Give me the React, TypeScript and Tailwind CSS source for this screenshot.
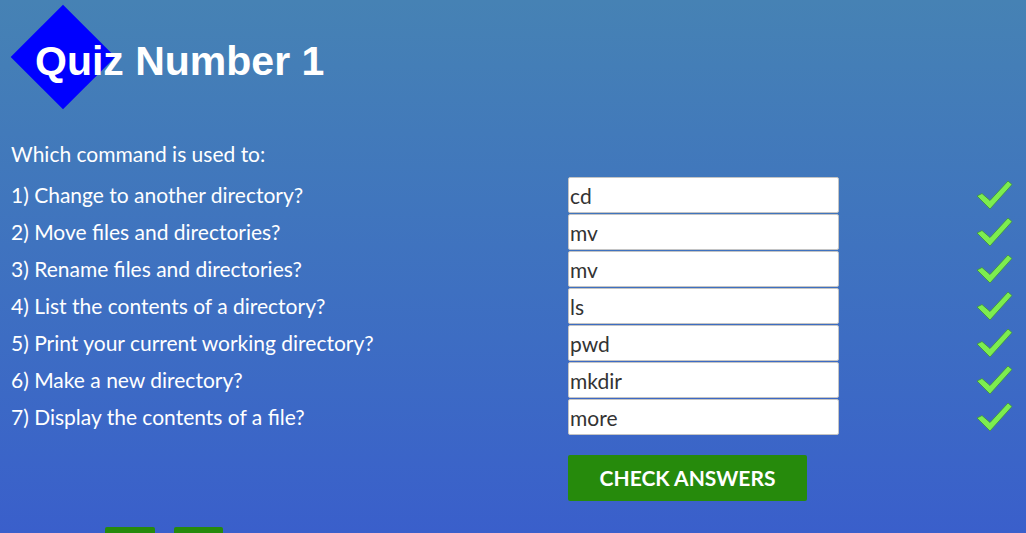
import React from "react";

const rows = [
  { q: "1) Change to another directory?", a: "cd" },
  { q: "2) Move files and directories?", a: "mv" },
  { q: "3) Rename files and directories?", a: "mv" },
  { q: "4) List the contents of a directory?", a: "ls" },
  { q: "5) Print your current working directory?", a: "pwd" },
  { q: "6) Make a new directory?", a: "mkdir" },
  { q: "7) Display the contents of a file?", a: "more" },
];

function Check() {
  return (
    <svg width="40" height="34" viewBox="0 0 40 34" className="block">
      <polygon
        points="3,18 8,15.5 16,22.5 34,3 38,6.5 16,31"
        fill="#7ded4f"
        stroke="#3c8f40"
        strokeWidth="0.8"
        strokeLinejoin="round"
      />
    </svg>
  );
}

export default function App() {
  return (
    <div
      className="h-screen overflow-hidden bg-gradient-to-b from-[#4682b4] to-[#3a5fcb] text-white"
      style={{ fontFamily: "Lato, 'Open Sans', sans-serif" }}
    >
      <div className="relative h-[120px]">
        <div className="absolute left-[26px] top-[20px] w-[74px] h-[74px] bg-[#0000ff] rotate-45" />
        <h1
          className="absolute left-[35px] top-[41px] text-[41px] leading-none font-bold"
          style={{ fontFamily: "'Liberation Sans', Arial, sans-serif" }}
        >
          Quiz Number 1
        </h1>
      </div>
      <div className="pl-[11px] pt-[20px] text-[21px] leading-[28px]">Which command is used to:</div>
      <div className="mt-[9px] flex flex-col gap-px">
        {rows.map((r, i) => (
          <div key={i} className="flex items-center h-[36px]">
            <div className="w-[568px] pl-[11px] text-[21px]">{r.q}</div>
            <input
              readOnly
              value={r.a}
              className="w-[271px] h-[36px] bg-white border border-[#c4c4c4] rounded-[2px] px-[1px] text-[21px] text-[#333]"
              style={{ fontFamily: "Lato, 'Open Sans', sans-serif" }}
            />
            <div className="ml-[135px]">
              <Check />
            </div>
          </div>
        ))}
      </div>
      <div className="pl-[568px] mt-[20px]">
        <button className="w-[239px] h-[46px] bg-[#268a0c] rounded-[2px] text-white font-bold text-[21px]">
          CHECK ANSWERS
        </button>
      </div>
      <div className="flex gap-[19px] pl-[105px] mt-[26px]">
        <div className="w-[50px] h-[40px] bg-[#268a0c] rounded-t-[2px]" />
        <div className="w-[49px] h-[40px] bg-[#268a0c] rounded-t-[2px]" />
      </div>
    </div>
  );
}
